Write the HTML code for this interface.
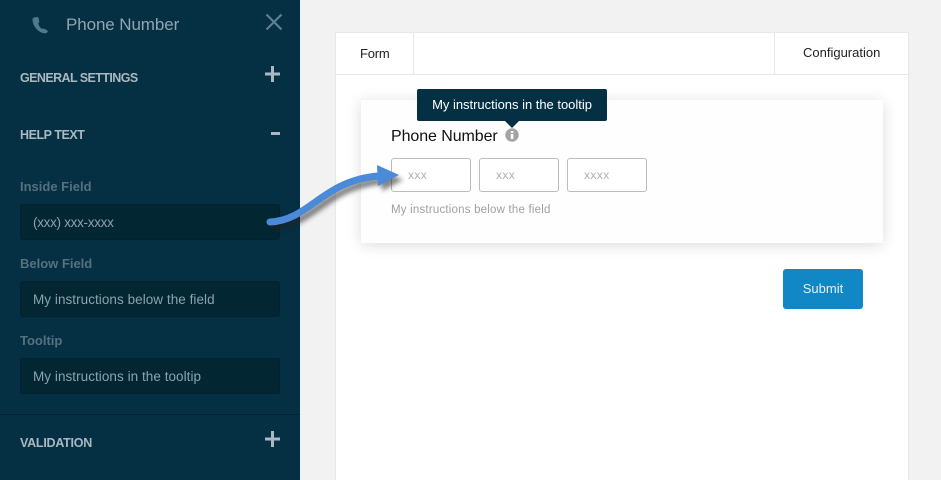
<!DOCTYPE html>
<html><head><meta charset="utf-8">
<style>
*{box-sizing:border-box;margin:0;padding:0}
html,body{width:941px;height:480px;overflow:hidden;background:#f1f2f1;font-family:"Liberation Sans",sans-serif}
.a{position:absolute;white-space:nowrap}
#side{position:absolute;left:0;top:0;width:300px;height:480px;background:#052f43}
.h{left:20px;font-size:12.5px;font-weight:bold;color:#aab8c0;letter-spacing:-.45px;line-height:16px}
.l{left:20px;font-size:13px;font-weight:bold;color:#55717f;line-height:16px;letter-spacing:0}
.f{left:20px;width:260px;height:36px;background:#032633;border:1px solid #04212e;border-radius:3px;color:#8aa3ae;font-size:13.5px;line-height:35px;padding-left:12px;letter-spacing:.05px}
.in{top:158px;width:80px;height:34px;background:#fff;border:1px solid #bcbcbc;border-radius:3px;color:#b0b0b0;font-size:12px;line-height:32px;padding-left:16px;letter-spacing:.4px}
</style></head><body>
<div id="side">
<svg class="a" style="left:30px;top:14px" width="20" height="20" viewBox="0 0 20 20"><path d="M4 3.5L7 3C8 3 8.5 3.5 8.7 4.5L9.3 7.5C9.4 8.3 9 8.8 8.2 9.2C8.6 11.5 10 13.5 12 15C12.8 14.5 13.5 14.3 14.2 14.8L17 16.2C18 16.8 18 17.6 17.4 18.2C16 19.5 14 19.6 12 18.8C6 16.5 2.4 10 2.5 5.5C2.5 4.5 3 3.8 4 3.5Z" fill="#4f7a8e"/></svg>
<div class="a" style="left:66px;top:15px;font-size:17px;line-height:20px;color:#8fa5b0;letter-spacing:-.1px">Phone Number</div>
<svg class="a" style="left:265px;top:13px" width="18" height="18"><path d="M1.5 1.5L16.5 16.5M16.5 1.5L1.5 16.5" stroke="#5f7f8e" stroke-width="2.2"/></svg>
<div class="a h" style="top:70px;letter-spacing:-.58px">GENERAL SETTINGS</div>
<svg class="a" style="left:265px;top:66px" width="15" height="16"><path d="M0 6.5H15V9.5H0ZM6 0H9V16H6Z" fill="#a9b8c1"/></svg>
<div class="a h" style="top:127px">HELP TEXT</div>
<div class="a" style="left:271px;top:132px;width:9px;height:3px;background:#a9b8c1"></div>
<div class="a l" style="top:179px">Inside Field</div>
<div class="a f" style="top:204px;letter-spacing:-.3px">(xxx) xxx-xxxx</div>
<div class="a l" style="top:256px">Below Field</div>
<div class="a f" style="top:281px">My instructions below the field</div>
<div class="a l" style="top:333px">Tooltip</div>
<div class="a f" style="top:358px">My instructions in the tooltip</div>
<div class="a" style="left:0;top:414px;width:300px;height:1px;background:#04222f"></div>
<div class="a h" style="top:435px;letter-spacing:-.25px">VALIDATION</div>
<svg class="a" style="left:265px;top:431px" width="15" height="16"><path d="M0 6.5H15V9.5H0ZM6 0H9V16H6Z" fill="#a9b8c1"/></svg>
</div>

<div class="a" style="left:335px;top:32px;width:574px;height:448px;background:#fff;border:1px solid #e8e8e8;border-bottom:0"></div>
<div class="a" style="left:336px;top:74px;width:572px;height:1px;background:#e6e6e6"></div>
<div class="a" style="left:413px;top:33px;width:1px;height:41px;background:#e6e6e6"></div>
<div class="a" style="left:774px;top:33px;width:1px;height:41px;background:#e6e6e6"></div>
<div class="a" style="left:360px;top:46px;font-size:13px;line-height:15px;color:#222;letter-spacing:-.2px">Form</div>
<div class="a" style="left:803px;top:45px;font-size:13px;line-height:15px;color:#222">Configuration</div>

<div class="a" style="left:361px;top:100px;width:522px;height:143px;background:#fefefe;box-shadow:0 2px 14px rgba(0,0,0,.14)"></div>
<div class="a" style="left:391px;top:127px;font-size:16px;line-height:20px;color:#111;letter-spacing:-.08px">Phone Number</div>
<svg class="a" style="left:505px;top:128px" width="14" height="14"><circle cx="7" cy="7" r="6.7" fill="#a3a3a3"/><rect x="5.8" y="6" width="2.6" height="5" fill="#fff"/><rect x="5.8" y="3" width="2.6" height="2" fill="#fff"/></svg>
<div class="a" style="left:417px;top:89px;width:190px;height:32px;background:#052f43;border-radius:2px;color:#fff;font-size:13px;line-height:32px;text-align:center;letter-spacing:-.02px">My instructions in the tooltip</div>
<div class="a" style="left:505px;top:121px;width:0;height:0;border-left:7px solid transparent;border-right:7px solid transparent;border-top:7px solid #052f43"></div>
<div class="a in" style="left:391px">xxx</div>
<div class="a in" style="left:479px">xxx</div>
<div class="a in" style="left:567px">xxxx</div>
<div class="a" style="left:391px;top:203px;font-size:11.5px;line-height:14px;color:#a0a0a0;letter-spacing:.2px">My instructions below the field</div>
<div class="a" style="left:783px;top:269px;width:80px;height:40px;background:#1287c5;border-radius:3px;color:#e4f1f8;font-size:13px;line-height:39px;text-align:center">Submit</div>

<svg class="a" style="left:260px;top:160px" width="150" height="75" viewBox="0 0 150 75">
<defs><filter id="b" x="-20%" y="-40%" width="140%" height="180%"><feGaussianBlur stdDeviation="2.5"/></filter></defs>
<g transform="translate(4 5)" opacity=".55" filter="url(#b)"><path d="M9 62C50 60 62 21 118 16" fill="none" stroke="#222" stroke-width="7"/><path d="M117 5L139 15L118 26Z" fill="#222"/></g>
<path d="M10 62C50 60 62 21 118 16" fill="none" stroke="#4a8ad8" stroke-width="7" stroke-linecap="round"/>
<path d="M117 5L139 15L118 26Z" fill="#4a8ad8"/>
</svg>
</body></html>
